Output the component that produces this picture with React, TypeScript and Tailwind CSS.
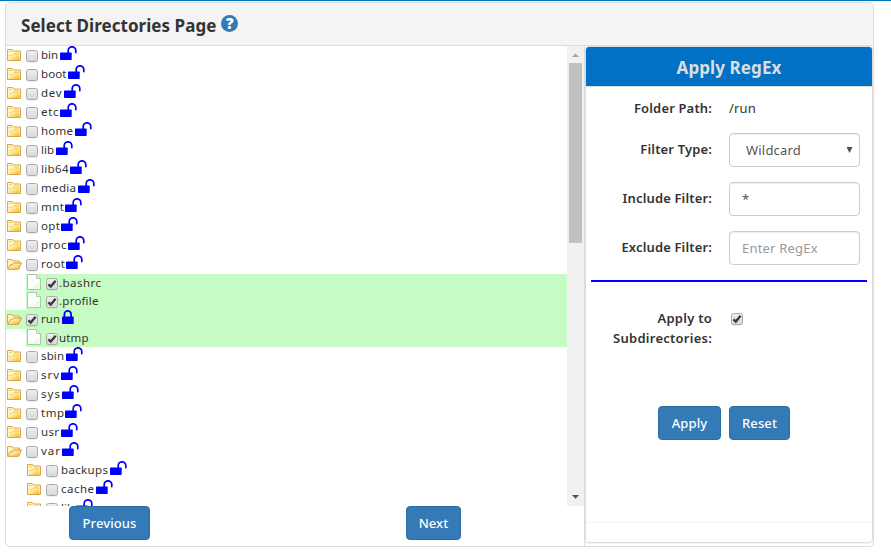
import React from "react";

type Kind = "closed" | "open" | "file";
type Row = { name: string; kind: Kind; w: string; tw: number; nested?: boolean; checked?: boolean; locked?: boolean };

const rows: Row[] = [
  { name: "bin", kind: "closed", w: "w-[19px]", tw: 17 },
  { name: "boot", kind: "closed", w: "w-[27px]", tw: 25.5 },
  { name: "dev", kind: "closed", w: "w-[23px]", tw: 20.5 },
  { name: "etc", kind: "closed", w: "w-[19px]", tw: 17.5 },
  { name: "home", kind: "closed", w: "w-[34px]", tw: 32 },
  { name: "lib", kind: "closed", w: "w-[15px]", tw: 13 },
  { name: "lib64", kind: "closed", w: "w-[29px]", tw: 27.5 },
  { name: "media", kind: "closed", w: "w-[37px]", tw: 35 },
  { name: "mnt", kind: "closed", w: "w-[24px]", tw: 23 },
  { name: "opt", kind: "closed", w: "w-[20px]", tw: 19 },
  { name: "proc", kind: "closed", w: "w-[27px]", tw: 25.5 },
  { name: "root", kind: "open", w: "w-[25px]", tw: 24 },
  { name: ".bashrc", kind: "file", w: "w-[42px]", tw: 42, nested: true, checked: true },
  { name: ".profile", kind: "file", w: "w-[40px]", tw: 39.5, nested: true, checked: true },
  { name: "run", kind: "open", w: "w-[21px]", tw: 19, checked: true, locked: true },
  { name: "utmp", kind: "file", w: "w-[30px]", tw: 29.5, nested: true, checked: true },
  { name: "sbin", kind: "closed", w: "w-[25px]", tw: 23 },
  { name: "srv", kind: "closed", w: "w-[20px]", tw: 18 },
  { name: "sys", kind: "closed", w: "w-[21px]", tw: 19 },
  { name: "tmp", kind: "closed", w: "w-[24px]", tw: 23 },
  { name: "usr", kind: "closed", w: "w-[20px]", tw: 18 },
  { name: "var", kind: "open", w: "w-[21px]", tw: 19 },
  { name: "backups", kind: "closed", w: "w-[49px]", tw: 47, nested: true },
  { name: "cache", kind: "closed", w: "w-[35px]", tw: 33, nested: true },
  { name: "lib", kind: "closed", w: "w-[15px]", tw: 13, nested: true },
];

function Folder({ open }: { open: boolean }) {
  return (
    <svg className="mt-[3px] block shrink-0" width="15" height="12" viewBox="0 0 15 12">
      <defs>
        <linearGradient id="gold" x1="0" y1="0" x2="1" y2="1">
          <stop offset="0" stopColor="#fff8c8" />
          <stop offset=".5" stopColor="#ffe38a" />
          <stop offset="1" stopColor="#e9b820" />
        </linearGradient>
      </defs>
      {open ? (
        <>
          <path d="M.5 10.5V1.5h4.5l1 1.5h6.5v3" fill="#fff3b8" stroke="#dfa94b" />
          <path d="M.6 11L3.8 6.5h1.7l1.2-1.5h7.8L11.5 11.3H.6z" fill="url(#gold)" stroke="#da9a3f" />
        </>
      ) : (
        <>
          <path d="M.5 .5h5l1 1.5h7v9.5H.5z" fill="#fff5c0" stroke="#dda64b" />
          <path d="M2 2.5h2.6M7 4h5" stroke="#f3cb65" />
          <path d="M2 6.5h3l1.3-1.5H12.5v6H2z" fill="url(#gold)" />
          <path d="M2 6.5h3l1.3-1.5H12.5" fill="none" stroke="#edc463" strokeWidth=".6" />
        </>
      )}
    </svg>
  );
}

function FileIcon() {
  return (
    <svg className="block shrink-0" width="15" height="16" viewBox="0 0 15 16">
      <path d="M.5.5h9l4 4v11H.5z" fill="#fdfdfd" stroke="#a3cf9f" />
      <path d="M9.5.8v3.7h3.7" fill="#f2f2f2" stroke="#b7c8b5" />
      <path d="M5 14.5L12.5 8v6.5z" fill="#f3f3f3" />
    </svg>
  );
}

function Check({ on = false }: { on?: boolean }) {
  return (
    <span className="block h-3 w-3 shrink-0 rounded-[2.5px] border border-[#a9a9a9] bg-linear-to-b from-[#eeeeee] to-[#d9d9d9] shadow-[0_1px_0_rgba(0,0,0,0.06)]">
      {on && (
        <svg className="block" width="10" height="10" viewBox="0 0 10 10">
          <path d="M1.4 5.3l2.4 2.3L8.6 1.8" fill="none" stroke="#393939" strokeWidth="2.3" />
        </svg>
      )}
    </span>
  );
}

function Lock({ closed = false }: { closed?: boolean }) {
  return (
    <svg className="block shrink-0" width="18" height="16" viewBox="0 0 18 16" fill="none">
      <rect x="0" y="6.5" width="11.7" height="7.5" rx=".7" fill="#00f" />
      {closed ? (
        <path d="M2.4 7V4.3a3.35 3.35 0 0 1 6.7 0V7" stroke="#00f" strokeWidth="1.8" />
      ) : (
        <path d="M8.2 7V4.6a3.8 3.8 0 0 1 7.6 0v2" stroke="#00f" strokeWidth="1.7" strokeLinecap="round" />
      )}
    </svg>
  );
}

function TreeRow({ row }: { row: Row }) {
  const file = row.kind === "file";
  return (
    <div className={row.nested ? "pl-5" : ""}>
      <div className={`flex items-start pl-px ${file ? "h-[18px]" : "h-[19px]"} ${row.checked ? "bg-[#c6fcc3]" : ""}`}>
        {file ? <FileIcon /> : <Folder open={row.kind === "open"} />}
        <span className="mt-1 ml-1"><Check on={row.checked} /></span>
        <svg className={`${row.w} ${file ? "ml-px" : "ml-[3px]"} block h-[18px] shrink-0 overflow-visible`}>
          <text x="0" y="13" textLength={row.tw} fontSize="11.5" fill="#333" className="font-['Noto_Sans',sans-serif]">{row.name}</text>
        </svg>
        {!file && <Lock closed={row.locked} />}
      </div>
    </div>
  );
}

function Button({ children, className }: { children: string; className: string }) {
  return (
    <button className={`flex h-[34px] items-center justify-center rounded-[4px] border border-[#2e6da4] bg-[#337ab7] pt-0.5 text-[13px] font-medium tracking-[0.1px] text-white ${className}`}>
      {children}
    </button>
  );
}

function Field({ label, children }: { label: string; children: React.ReactNode }) {
  return (
    <div className="flex h-[49px] items-start">
      <label className="w-[126px] pt-1.5 text-right text-[13px] leading-5 font-semibold tracking-[0.15px]">{label}</label>
      <div className="ml-[17px] h-[34px] w-[131px]">{children}</div>
    </div>
  );
}

const inputClass = "flex h-[34px] w-full items-center rounded-[4px] border border-[#ccc] pt-px pl-3 text-[13px] tracking-[0.2px] shadow-[inset_0_1px_1px_rgba(0,0,0,0.075)]";

export default function App() {
  return (
    <div className="h-[555px] w-[891px] overflow-hidden border-t border-[#0071c5] bg-white font-['Noto_Sans',sans-serif] text-[#333]">
      <main className="mt-px ml-[5px] flex h-[545px] w-[869px] flex-col overflow-hidden rounded-[4px] border border-[#ddd]">
        <header className="flex h-[43px] shrink-0 items-center border-b border-[#ddd] bg-[#f4f4f4] pl-[15px]">
          <h1 className="pt-[3px] text-[17px] font-bold tracking-[0.04px] whitespace-nowrap">Select Directories Page</h1>
          <span className="mb-0.5 ml-[5px] flex h-[17px] w-[17px] items-center justify-center rounded-full bg-[#337ab7] text-[15px] leading-none font-black text-white">?</span>
        </header>
        <div className="flex min-h-0 flex-1">
          <section className="w-[579px] shrink-0 border-r border-[#ddd]">
            <div className="flex h-[460px]">
              <div className="h-full w-[561px] overflow-hidden">
                {rows.map((row, i) => <TreeRow key={i} row={row} />)}
              </div>
              <div className="flex w-[17px] flex-col items-center bg-[#f1f1f1]">
                <svg className="block h-[17px] w-[17px] shrink-0"><path d="M5 11L8.5 7.5 12 11z" fill="#a3a3a3" /></svg>
                <div className="h-[180px] w-[13px] bg-[#c1c1c1]" />
                <svg className="mt-auto block h-[17px] w-[17px] shrink-0"><path d="M5 6L8.5 9.8 12 6z" fill="#505050" /></svg>
              </div>
            </div>
            <div className="flex pl-[63px]">
              <Button className="w-[81px]">Previous</Button>
              <Button className="ml-64 w-[55px]">Next</Button>
            </div>
          </section>
          <aside className="h-[497px] w-[288px] rounded-[4px] border border-[#ddd] shadow-[0_1px_1px_rgba(0,0,0,0.05)]">
            <div className="flex h-[476px] flex-col rounded-[4px] border-b border-[#f3f3f3]">
              <h2 className="flex h-10 shrink-0 items-center justify-center rounded-t-[3px] border-b border-[#ddd] bg-[#0071c5] pt-0.5 text-[17px] font-bold tracking-[0.1px] text-[#ddd]">Apply RegEx</h2>
              <div className="pt-[5px]">
                <div className="flex h-[41px] pt-1.5 text-[13px] leading-5">
                  <span className="w-[126px] text-right font-semibold tracking-[0.15px]">Folder Path:</span>
                  <span className="ml-[17px] tracking-[0.15px]">/run</span>
                </div>
                <Field label="Filter Type:">
                  <div className={`${inputClass} justify-between pr-1.5 text-[#555]`}>
                    <span className="ml-1">Wildcard</span>
                    <svg width="7" height="6" className="mb-0.5 block"><path d="M.5 0h6L3.5 6z" fill="#505050" /></svg>
                  </div>
                </Field>
                <Field label="Include Filter:"><div className={`${inputClass} text-[#555]`}>*</div></Field>
                <Field label="Exclude Filter:"><div className={`${inputClass} text-[#999]`}>Enter RegEx</div></Field>
              </div>
              <div className="mx-[5px] h-0.5 shrink-0 bg-[#00f]" />
              <div className="mt-[26px] flex">
                <label className="w-[126px] text-right text-[13px] leading-5 font-semibold tracking-[0.25px]">Apply to<br />Subdirectories:</label>
                <span className="mt-[5px] ml-[19px]"><Check on /></span>
              </div>
              <div className="mt-[58px] flex gap-2 pl-[72px]">
                <Button className="w-[63px]">Apply</Button>
                <Button className="w-[61px]">Reset</Button>
              </div>
            </div>
          </aside>
        </div>
      </main>
    </div>
  );
}
